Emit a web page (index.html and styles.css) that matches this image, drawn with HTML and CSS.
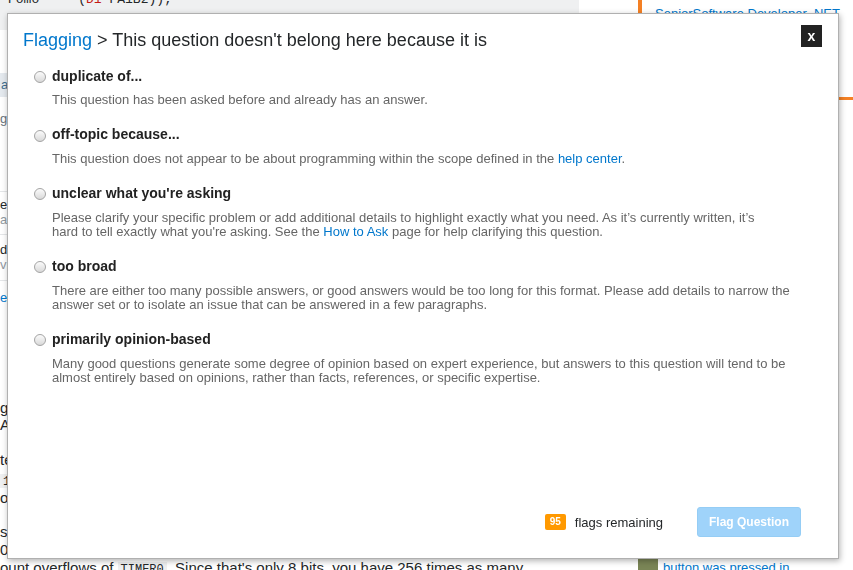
FILE: index.html
```html
<!DOCTYPE html>
<html lang="en">
<head>
<meta charset="utf-8">
<title>Flagging</title>
<link rel="stylesheet" href="styles.css">
</head>
<body>
<div class="page">
  <div class="main">
    <div class="code-top"><pre>Pomo     (<span class="red">D1</span> PA1B2));</pre></div>
    <div class="bg-row r-tag">android</div>
    <div class="bg-row r-g1 muted">gcc</div>
    <div class="r-hr r-hr1"></div>
    <div class="bg-row r-e">embedded</div>
    <div class="bg-row r-a faint">asked</div>
    <div class="r-hr r-hr2"></div>
    <div class="bg-row r-d">debounce</div>
    <div class="bg-row r-v faint">viewed</div>
    <div class="r-hr r-hr3"></div>
    <div class="bg-row r-en link">en</div>
    <div class="bg-row post r-p1">get</div>
    <div class="bg-row post r-p2">AVR</div>
    <div class="bg-row post r-p3">ten</div>
    <div class="bg-row post r-p4"><code>1</code></div>
    <div class="bg-row post r-p5">occurs</div>
    <div class="bg-row post r-p6">so</div>
    <div class="bg-row post r-p7">0</div>
    <div class="bg-row post r-last">ount overflows of <code>TIMER0</code>. Since that's only 8 bits, you have 256 times as many</div>
  </div>
  <div class="side">
    <div class="job"><a href="#" class="link">SeniorSoftware Developer .NET</a></div>
    <div class="side-bar"></div>
    <div class="side-bottom"><span class="avatar"></span><a href="#" class="link">button was pressed in</a></div>
  </div>
</div>

<div class="modal">
  <div class="modal-head">
    <h1 class="modal-title"><a href="#" class="title-link">Flagging</a> &gt; This question doesn't belong here because it is</h1>
    <button class="close" type="button">x</button>
  </div>
  <ul class="options">
    <li class="option">
      <label class="opt-label"><span class="radio"></span>duplicate of...</label>
      <p class="opt-desc">This question has been asked before and already has an answer.</p>
    </li>
    <li class="option">
      <label class="opt-label"><span class="radio"></span>off-topic because...</label>
      <p class="opt-desc">This question does not appear to be about programming within the scope defined in the <a href="#" class="link">help center</a>.</p>
    </li>
    <li class="option">
      <label class="opt-label"><span class="radio"></span>unclear what you're asking</label>
      <p class="opt-desc">Please clarify your specific problem or add additional details to highlight exactly what you need. As it’s currently written, it’s<br>hard to tell exactly what you're asking. See the <a href="#" class="link">How to Ask</a> page for help clarifying this question.</p>
    </li>
    <li class="option">
      <label class="opt-label"><span class="radio"></span>too broad</label>
      <p class="opt-desc">There are either too many possible answers, or good answers would be too long for this format. Please add details to narrow the<br>answer set or to isolate an issue that can be answered in a few paragraphs.</p>
    </li>
    <li class="option">
      <label class="opt-label"><span class="radio"></span>primarily opinion-based</label>
      <p class="opt-desc">Many good questions generate some degree of opinion based on expert experience, but answers to this question will tend to be<br>almost entirely based on opinions, rather than facts, references, or specific expertise.</p>
    </li>
  </ul>
  <div class="modal-foot">
    <span class="badge">95</span>
    <span class="remaining">flags remaining</span>
    <button class="flag-btn" type="button">Flag Question</button>
  </div>
</div>
</body>
</html>
```

FILE: styles.css
```css
* { box-sizing: border-box; }
html, body { margin: 0; padding: 0; }
body {
  width: 853px;
  height: 570px;
  overflow: hidden;
  background: #fff;
  color: #242729;
  font-family: "Liberation Sans", Arial, sans-serif;
}
a { text-decoration: none; }
.link { color: #07c; }

/* background page */
.page { display: flex; height: 570px; overflow: hidden; }
.main { width: 579px; flex: none; }
.code-top { height: 30px; background: #eff0f1; overflow: hidden; }
.code-top pre {
  margin: -8px 0 0 8px;
  font: 13px/15px "Liberation Mono", monospace;
  color: #242729;
}
.red { color: #c41a16; }

.bg-row {
  height: 16px;
  line-height: 16px;
  font-size: 13px;
  white-space: nowrap;
  overflow: hidden;
}
.muted { color: #6a737c; }
.faint { color: #9199a1; }
.r-tag {
  margin-top: 43px;
  height: 24px;
  line-height: 24px;
  width: 120px;
  padding-left: 1px;
  background: #e4e9ee;
  color: #3e6d8e;
}
.r-g1 { margin-top: 14px; }
.r-hr { height: 0; border-top: 1px solid #e4e6e8; }
.r-hr1 { margin-top: 64px; }
.r-e { margin-top: 5px; }
.r-a { height: 14px; line-height: 14px; }
.r-hr2 { margin-top: 7px; }
.r-d { margin-top: 7px; }
.r-v { height: 14px; line-height: 14px; }
.r-hr3 { margin-top: 8px; }
.r-en { margin-top: 9px; }
.post { font-size: 15px; color: #242729; }
.post code {
  font: 12px "Liberation Mono", monospace;
  background: #eff0f1;
  padding: 1px 3px;
}
.r-p1 { margin-top: 94px; }
.r-p2 { margin-top: 1px; }
.r-p3 { margin-top: 19px; }
.r-p4 { margin-top: 4px; }
.r-p4 code { display: inline-block; height: 16px; line-height: 16px; padding: 0 3px; }
.r-p5 { margin-top: 2px; }
.r-p6 { margin-top: 18px; }
.r-p7 { margin-top: 2px; }
.r-last { height: 20px; line-height: 20px; }

.side { flex: 1; font-size: 13px; }
.job {
  margin-left: 59px;
  height: 60px;
  border-left: 4px solid #f48024;
  padding: 6px 0 0 13px;
  line-height: 16px;
}
.side-bar { margin: 37px 0 0 259px; height: 3px; background: #f48024; }
.side-bottom {
  margin: 458px 0 0 59px;
  display: flex;
  gap: 5px;
  height: 20px;
  line-height: 20px;
}
.avatar { width: 20px; height: 20px; background: #7a8556; flex: none; }

/* modal */
.modal {
  position: fixed;
  left: 7px;
  top: 13px;
  width: 832px;
  height: 546px;
  background: #fff;
  border: 1px solid #b0b0b0;
  box-shadow: 1px 2px 6px rgba(0, 0, 0, 0.3);
  display: flex;
  flex-direction: column;
  padding: 11px 16px 21px 15px;
}
.modal-head {
  display: flex;
  justify-content: space-between;
  align-items: flex-start;
}
.modal-title {
  margin: 3.5px 0 0;
  font-size: 18px;
  line-height: 22px;
  font-weight: normal;
  color: #242729;
}
.title-link { color: #07c; }
.close {
  width: 21px;
  height: 22px;
  margin: 0;
  padding: 0;
  border: none;
  background: #222;
  color: #fff;
  font: bold 14px/20px "Liberation Sans", Arial, sans-serif;
  text-align: center;
}

.options {
  list-style: none;
  margin: 17.2px 0 0 11px;
  padding: 0;
}
.option { margin-bottom: 18.55px; }
.opt-label {
  display: flex;
  align-items: center;
  gap: 6px;
  font-size: 14px;
  font-weight: bold;
  line-height: 17px;
  color: #222;
}
.radio {
  flex: none;
  width: 12px;
  height: 12px;
  margin-top: 2px;
  border-radius: 50%;
  border: 1px solid #a4a4a4;
  background: linear-gradient(#fbfbfb, #d9d9d9);
}
.opt-desc {
  margin: 8.65px 0 0 18px;
  font-size: 13px;
  line-height: 14.4px;
  color: #666;
}

.modal-foot {
  margin-top: auto;
  display: flex;
  justify-content: flex-end;
  align-items: center;
  padding-right: 21px;
}
.badge {
  height: 16px;
  line-height: 16px;
  padding: 0 5px;
  border-radius: 2px;
  background: #f90;
  color: #fff;
  font-size: 10px;
  font-weight: bold;
  margin-right: 9px;
}
.remaining { font-size: 13px; color: #242729; margin-right: 34px; }
.flag-btn {
  height: 30px;
  margin: 0;
  padding: 0 11px;
  border: 1px solid #95cdf5;
  border-radius: 3px;
  background: #9fd3fa;
  color: #fff;
  font: bold 12px "Liberation Sans", Arial, sans-serif;
}
```
